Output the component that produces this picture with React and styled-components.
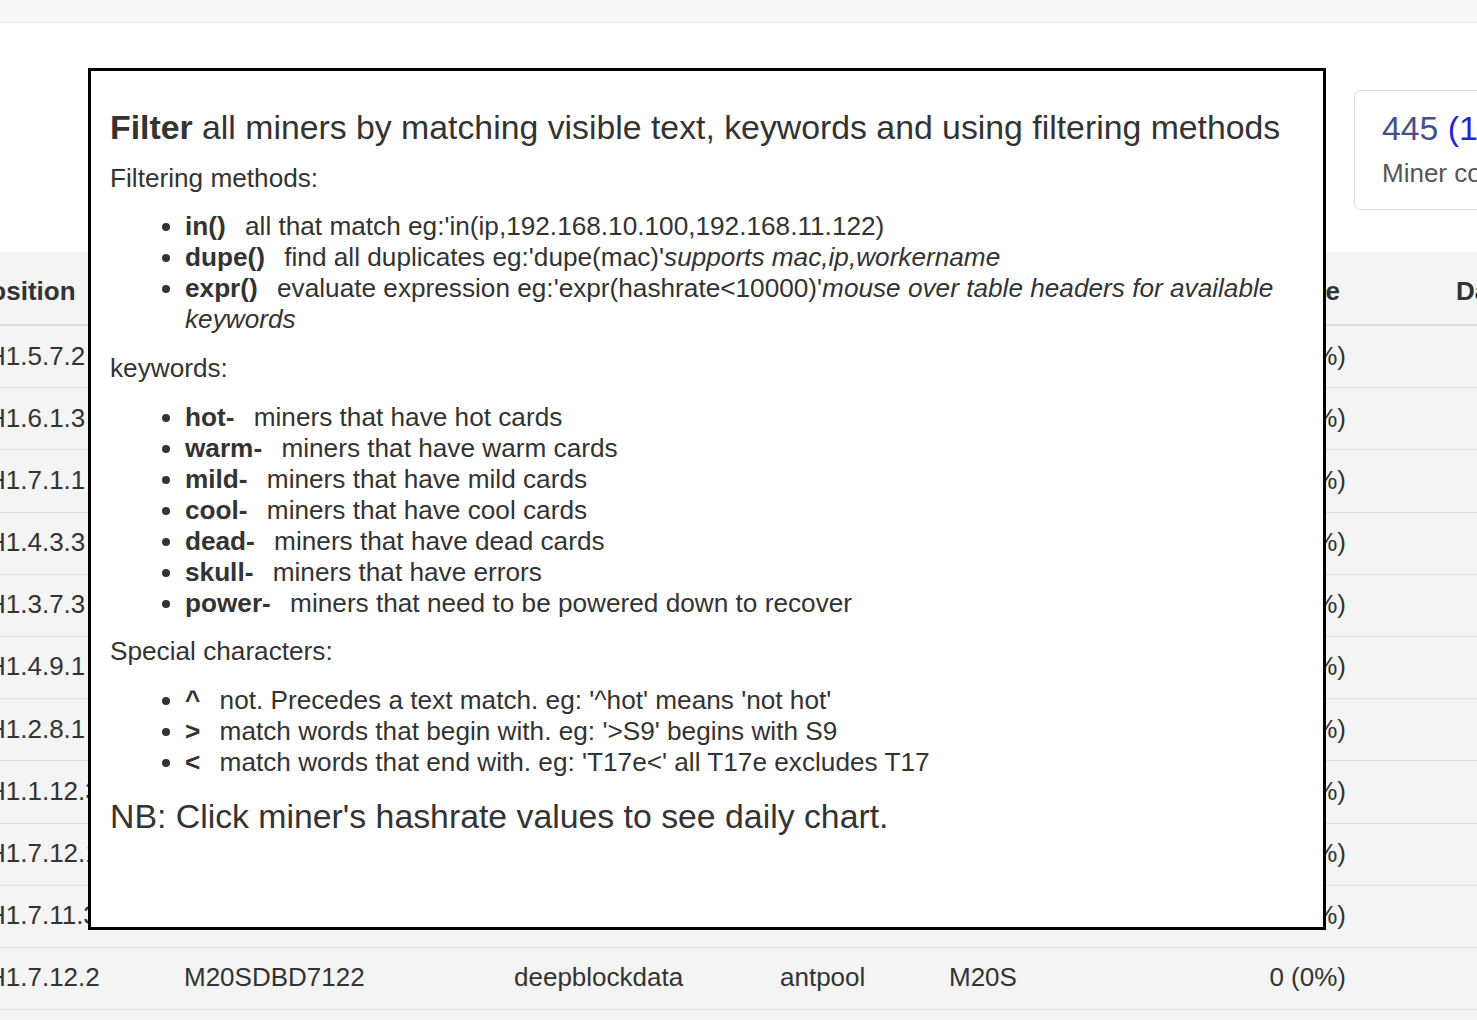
import React from 'react';
import styled, { createGlobalStyle } from 'styled-components';

const GlobalStyle = createGlobalStyle`
  html, body {
    margin: 0;
    padding: 0;
  }

  body {
    background: #fff;
    color: #333;
    font-family: 'Liberation Sans', Arial, sans-serif;
    overflow: hidden;
  }

  * {
    box-sizing: border-box;
  }
`;

const Page = styled.div`
  height: 1020px;
  overflow: hidden;
  position: relative;
  width: 1477px;
`;

const TopBar = styled.div`
  background: #f8f8f8;
  border-bottom: 1px solid #e7e7e7;
  height: 23px;
`;

const StatsRow = styled.div`
  display: flex;
  gap: 30px;
  height: 229px;
  padding: 67px 0 0 154px;
`;

const StatCard = styled.div`
  border: 1px solid #dedede;
  border-radius: 7px;
  flex: 0 0 270px;
  height: 120px;
  padding: 17px 27px 0;
  white-space: nowrap;
`;

const StatValue = styled.div`
  color: #474f8b;
  font-size: 33.8px;
  line-height: 40px;
`;

const StatExtra = styled.span`
  color: #2323dc;
`;

const StatLabel = styled.div`
  color: #555;
  font-size: 26px;
  line-height: 31px;
  margin-top: 10px;
`;

const TableWrap = styled.div`
  margin-left: -40px;
`;

const Table = styled.table`
  border-collapse: collapse;
  font-size: 26px;
  line-height: 30px;
  table-layout: fixed;
  width: 1640px;
`;

const Head = styled.thead`
  background: #f4f4f4;
`;

const Th = styled.th`
  border-bottom: 2px solid #dcdcdc;
  font-weight: bold;
  height: 73px;
  padding: 5px ${(p) => (p.$right ? '105px' : '13px')} 0 ${(p) => (p.$last ? '11px' : '13px')};
  text-align: ${(p) => (p.$right ? 'right' : 'left')};
  white-space: nowrap;
`;

const Row = styled.tr`
  background: #f4f4f4;
`;

const Td = styled.td`
  border-top: 1px solid #dedede;
  overflow: hidden;
  padding: 14.5px ${(p) => (p.$right ? '99px' : '13px')} 16.7px
    ${(p) => (p.$first ? '27px' : '13px')};
  text-align: ${(p) => (p.$right ? 'right' : 'left')};
  white-space: nowrap;
`;

const Popup = styled.div`
  background: #fff;
  border: 3px solid #000;
  font-size: 26.2px;
  height: 862px;
  left: 88px;
  line-height: 31px;
  padding: 36px 19px;
  position: absolute;
  top: 68px;
  width: 1238px;
  z-index: 10;
`;

const Title = styled.div`
  font-size: 33.8px;
  line-height: 40px;
  margin-bottom: 15.5px;
`;

const Section = styled.div``;

const List = styled.ul`
  margin: 17.7px 0;
  padding-left: 75px;
`;

const Term = styled.b`
  margin-right: 12px;
`;

const Note = styled.div`
  font-size: 33.8px;
  line-height: 40px;
  margin-top: 14px;
`;

const cards = [
  { value: '1.2 PH/s', extra: '', label: 'Total hashrate' },
  { value: '38', extra: ' (2)', label: 'Offline miners' },
  { value: '61°C', extra: '', label: 'Average temp' },
  { value: '12', extra: ' (3)', label: 'Hot cards' },
  { value: '445', extra: ' (1', label: 'Miner count' },
];

const rows = [
  ['H1.5.7.2', 'M20SDBD5721', 'deepblockdata', 'antpool', 'M20S', '0 (0%)'],
  ['H1.6.1.3', 'M20SDBD6133', 'deepblockdata', 'antpool', 'M20S', '0 (0%)'],
  ['H1.7.1.1', 'M20SDBD7111', 'deepblockdata', 'antpool', 'M20S', '0 (0%)'],
  ['H1.4.3.3', 'M20SDBD4333', 'deepblockdata', 'antpool', 'M20S', '0 (0%)'],
  ['H1.3.7.3', 'M20SDBD3733', 'deepblockdata', 'antpool', 'M20S', '0 (0%)'],
  ['H1.4.9.1', 'M20SDBD4911', 'deepblockdata', 'antpool', 'M20S', '0 (0%)'],
  ['H1.2.8.1', 'M20SDBD2811', 'deepblockdata', 'antpool', 'M20S', '0 (0%)'],
  ['H1.1.12.3', 'M20SDBD1123', 'deepblockdata', 'antpool', 'M20S', '0 (0%)'],
  ['H1.7.12.1', 'M20SDBD7121', 'deepblockdata', 'antpool', 'M20S', '0 (0%)'],
  ['H1.7.11.3', 'M20SDBD7113', 'deepblockdata', 'antpool', 'M20S', '0 (0%)'],
  ['H1.7.12.2', 'M20SDBD7122', 'deepblockdata', 'antpool', 'M20S', '0 (0%)'],
  ['H1.7.12.4', 'M20SDBD7124', 'deepblockdata', 'antpool', 'M20S', '0 (0%)'],
];

export default function App() {
  return (
    <Page>
      <GlobalStyle />
      <TopBar />

      <StatsRow>
        {cards.map((card) => (
          <StatCard key={card.label}>
            <StatValue>
              {card.value}
              <StatExtra>{card.extra}</StatExtra>
            </StatValue>
            <StatLabel>{card.label}</StatLabel>
          </StatCard>
        ))}
      </StatsRow>

      <TableWrap>
        <Table>
          <colgroup>
            <col style={{ width: 211 }} />
            <col style={{ width: 330 }} />
            <col style={{ width: 266 }} />
            <col style={{ width: 169 }} />
            <col style={{ width: 223 }} />
            <col style={{ width: 286 }} />
            <col style={{ width: 155 }} />
          </colgroup>
          <Head>
            <tr>
              <Th>Position</Th>
              <Th>Name</Th>
              <Th>Worker</Th>
              <Th>Pool</Th>
              <Th>Type</Th>
              <Th $right>Hashrate</Th>
              <Th $last>Date</Th>
            </tr>
          </Head>
          <tbody>
            {rows.map((r) => (
              <Row key={r[0]}>
                <Td $first>{r[0]}</Td>
                <Td>{r[1]}</Td>
                <Td>{r[2]}</Td>
                <Td>{r[3]}</Td>
                <Td>{r[4]}</Td>
                <Td $right>{r[5]}</Td>
                <Td />
              </Row>
            ))}
          </tbody>
        </Table>
      </TableWrap>

      <Popup>
        <Title>
          <b>Filter</b> all miners by matching visible text, keywords and using filtering methods
        </Title>
        <Section>Filtering methods:</Section>
        <List>
          <li>
            <Term>in()</Term> all that match eg:'in(ip,192.168.10.100,192.168.11.122)
          </li>
          <li>
            <Term>dupe()</Term> find all duplicates eg:'dupe(mac)'
            <i>supports mac,ip,workername</i>
          </li>
          <li>
            <Term>expr()</Term> evaluate expression eg:'expr(hashrate&lt;10000)'
            <i>mouse over table headers for available keywords</i>
          </li>
        </List>
        <Section>keywords:</Section>
        <List>
          <li><Term>hot-</Term> miners that have hot cards</li>
          <li><Term>warm-</Term> miners that have warm cards</li>
          <li><Term>mild-</Term> miners that have mild cards</li>
          <li><Term>cool-</Term> miners that have cool cards</li>
          <li><Term>dead-</Term> miners that have dead cards</li>
          <li><Term>skull-</Term> miners that have errors</li>
          <li><Term>power-</Term> miners that need to be powered down to recover</li>
        </List>
        <Section>Special characters:</Section>
        <List>
          <li><Term>^</Term> not. Precedes a text match. eg: '^hot' means 'not hot'</li>
          <li><Term>&gt;</Term> match words that begin with. eg: '&gt;S9' begins with S9</li>
          <li><Term>&lt;</Term> match words that end with. eg: 'T17e&lt;' all T17e excludes T17</li>
        </List>
        <Note>NB: Click miner's hashrate values to see daily chart.</Note>
      </Popup>
    </Page>
  );
}
